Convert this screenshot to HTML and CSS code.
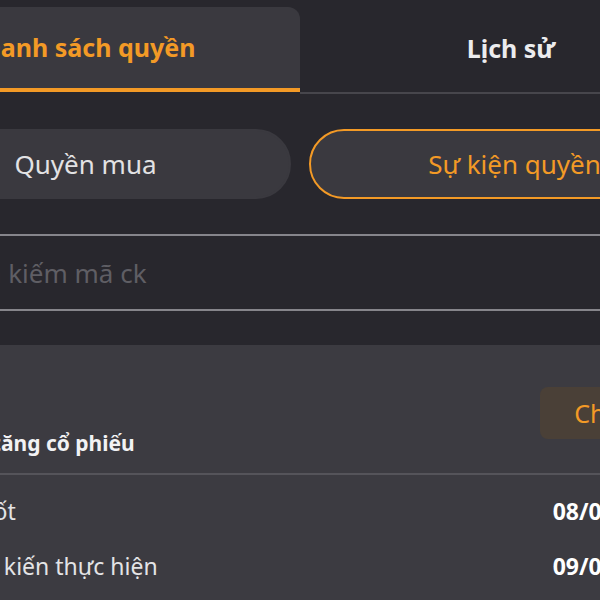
FILE: index.html
```html
<!DOCTYPE html>
<html lang="vi">
<head>
    <meta charset="UTF-8">
    <meta name="viewport" content="width=device-width, initial-scale=1.0">
    <title>Quyền</title>
    <link rel="stylesheet" href="styles.css">
</head>
<body>
    <div class="screen">
        <div class="tabs">
            <div class="tab tab-active">Danh sách quyền</div>
            <div class="tab">Lịch sử</div>
        </div>

        <div class="pills">
            <div class="pill">Quyền mua</div>
            <div class="pill pill-active">Sự kiện quyền</div>
        </div>

        <div class="search">
            <span class="search-placeholder">Tìm kiếm mã ck</span>
        </div>

        <div class="card">
            <div class="card-header">
                <div class="card-title">Phát hành tăng cổ phiếu</div>
                <button class="card-button">Chi tiết</button>
            </div>
            <div class="card-row">
                <span class="row-label">Ngày chốt</span>
                <span class="row-value">08/06/2023</span>
            </div>
            <div class="card-row">
                <span class="row-label">Ngày dự kiến thực hiện</span>
                <span class="row-value">09/06/2023</span>
            </div>
        </div>
    </div>
</body>
</html>
```

FILE: styles.css
```css
* {
    margin: 0;
    padding: 0;
    box-sizing: border-box;
}

body {
    font-family: 'Noto Sans', 'Open Sans', sans-serif;
    background: #28272d;
    color: #e4e4e6;
    overflow: hidden;
}

.screen {
    width: 844px;
    margin-left: -122px;
}

/* top tabs */
.tabs {
    display: flex;
    align-items: flex-end;
    padding-top: 7px;
}

.tab {
    flex: 1;
    height: 87px;
    display: flex;
    align-items: center;
    justify-content: center;
    font-size: 25px;
    font-weight: 700;
    color: #ececee;
    border-bottom: 2px solid #47464c;
    padding-bottom: 4px;
}

.tab-active {
    height: 85px;
    padding-bottom: 2px;
    background: #3a393f;
    color: #f39a26;
    border-radius: 12px 12px 0 0;
    border-bottom: 4px solid #f39a26;
    margin-bottom: 2px;
}

/* segment pills */
.pills {
    display: flex;
    gap: 18px;
    padding: 0 2px;
    margin-top: 35px;
}

.pill {
    flex: 1;
    height: 70px;
    border-radius: 35px;
    background: #3a393f;
    border: 2px solid #3a393f;
    display: flex;
    align-items: center;
    justify-content: center;
    font-size: 26px;
    color: #e2e2e4;
}

.pill-active {
    border-color: #f39a26;
    color: #f39a26;
}

/* search */
.search {
    margin: 35px 2px 0;
    height: 77px;
    border-top: 2px solid #86858b;
    border-bottom: 2px solid #86858b;
    display: flex;
    align-items: center;
    padding-left: 76px;
}

.search-placeholder {
    font-size: 26px;
    color: #5f5e64;
}

/* event card */
.card {
    margin-top: 34px;
    background: #3c3b41;
    padding: 0 45px 40px 28px;
}

.card-header {
    display: flex;
    justify-content: space-between;
    align-items: flex-end;
    padding-top: 42px;
    padding-bottom: 16px;
    border-bottom: 2px solid #55545a;
    margin-right: -45px;
}

.card-title {
    font-size: 21px;
    font-weight: 700;
    color: #f2f2f4;
    margin-left: -27px;
}

.card-button {
    font-family: inherit;
    font-size: 25px;
    color: #f39a26;
    background: #4a4037;
    border: none;
    border-radius: 8px;
    height: 52px;
    padding: 0 34px;
    margin-bottom: 18px;
    margin-right: 31px;
}

.card-row {
    display: flex;
    justify-content: space-between;
    align-items: center;
    height: 55px;
    font-size: 23px;
}

.card-header + .card-row {
    margin-top: 8px;
}

.row-label {
    color: #e4e4e6;
}

.row-value {
    font-weight: 700;
    color: #ffffff;
}
```
